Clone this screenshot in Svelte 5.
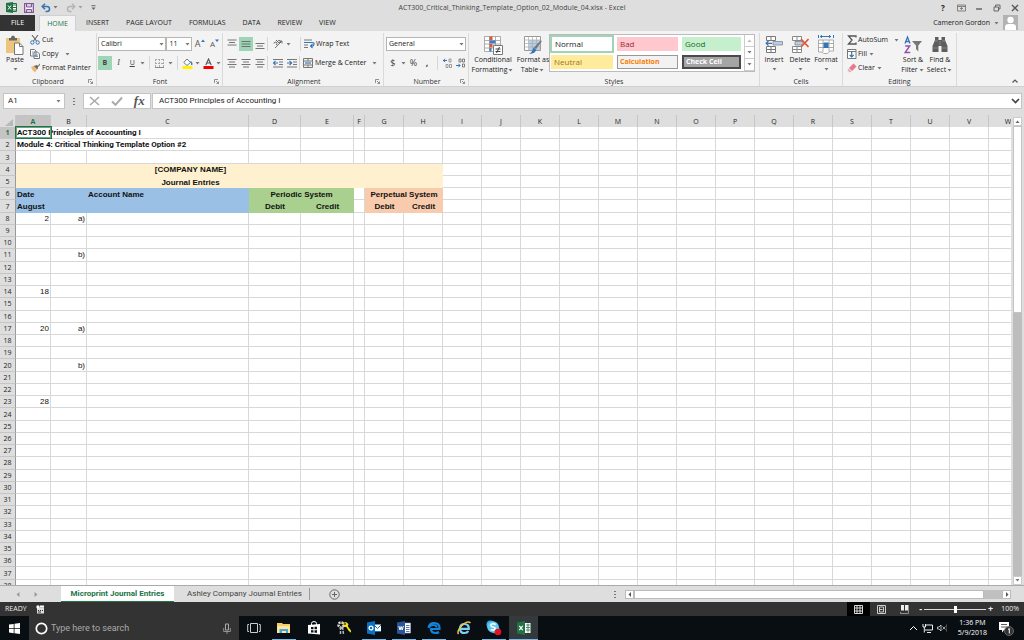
<script>
  const menuTabs = ['INSERT', 'PAGE LAYOUT', 'FORMULAS', 'DATA', 'REVIEW', 'VIEW'];
  const columns = [
    ['A', 35], ['B', 36], ['C', 162], ['D', 52], ['E', 53], ['F', 11], ['G', 39], ['H', 39],
    ['I', 39], ['J', 39], ['K', 39], ['L', 39], ['M', 39], ['N', 39], ['O', 39], ['P', 39],
    ['Q', 39], ['R', 39], ['S', 39], ['T', 39], ['U', 39], ['V', 39], ['W', 39]
  ];
  const tableWidth = columns.reduce((sum, c) => sum + c[1], 16);

  // Leading cells of each row; the remaining columns are filled with blanks.
  const content = {
    1: [{ t: 'ACT300 Principles of Accounting I', c: 'calibri open sel' }, { c: 'open' }],
    2: [{ t: 'Module 4: Critical Thinking Template Option #2', c: 'calibri open' }, { c: 'open' }],
    4: [{ t: '[COMPANY NAME]', c: 'yellow', span: 6 }, { c: 'yellow', span: 2 }],
    5: [{ t: 'Journal Entries', c: 'yellow', span: 6 }, { c: 'yellow', span: 2 }],
    6: [{ t: 'Date', c: 'blue' }, { c: 'blue' }, { t: 'Account Name', c: 'blue' }, { t: 'Periodic System', c: 'green', span: 2 }, {}, { t: 'Perpetual System', c: 'peach', span: 2 }],
    7: [{ t: 'August', c: 'blue' }, { c: 'blue' }, { c: 'blue' }, { t: 'Debit', c: 'green' }, { t: 'Credit', c: 'green' }, {}, { t: 'Debit', c: 'peach' }, { t: 'Credit', c: 'peach' }],
    8: [{ t: '2', c: 'num' }, { t: 'a)', c: 'num' }],
    11: [{}, { t: 'b)', c: 'num' }],
    14: [{ t: '18', c: 'num' }],
    17: [{ t: '20', c: 'num' }, { t: 'a)', c: 'num' }],
    20: [{}, { t: 'b)', c: 'num' }],
    23: [{ t: '28', c: 'num' }]
  };
  const rows = Array.from({ length: 38 }, (_, i) => {
    const cells = [...(content[i + 1] ?? [])];
    let used = cells.reduce((n, c) => n + (c.span ?? 1), 0);
    while (used++ < columns.length) cells.push({});
    return { n: i + 1, cells };
  });
</script>

{#snippet caret()}
  <svg class="caret" width="5" height="3" viewBox="0 0 5 3"><path d="M0.5 0h4L2.5 2.5z" fill="#777" /></svg>
{/snippet}

{#snippet launcher()}
  <svg class="launcher" width="5" height="5" viewBox="0 0 5 5"><path d="M.5 4V.5H4M2 2l2.500 2.500M4.500 2.500v2h-2" fill="none" stroke="#777" stroke-width=".8" /></svg>
{/snippet}

{#snippet lines(rowsY, center)}
  <svg width="10" height="10" viewBox="0 0 10 10">
    {#each rowsY as y, i}
      <path d={center && i % 2 ? `M2 ${y}h6` : `M.5 ${y}h9`} stroke="#666" stroke-width=".9" />
    {/each}
  </svg>
{/snippet}

<div class="app">
  <header class="titlebar">
    <div class="quick">
      <svg width="11" height="11" viewBox="0 0 11 11"><path d="M5 1.500h5.500v8H5z" fill="#fff" stroke="#217346" /><path d="M7 3h3M7 5.500h3M7 8h3" stroke="#217346" /><path d="M0 1l7-1v11l-7-1z" fill="#217346" /><path d="M2 3.500l3 4M5 3.500l-3 4" stroke="#fff" /></svg>
      <button aria-label="Save"><svg width="10" height="10" viewBox="0 0 10 10"><path d="M.7.7h8.600v8.600H.7z" fill="#fff" stroke="#80569b" stroke-width="1.300" /><path d="M2.500 1v3h5V1M2.500 9V6.500h5V9" fill="#d9c8e4" stroke="#80569b" /></svg></button>
      <button aria-label="Undo"><svg width="10" height="10" viewBox="0 0 10 10"><path d="M1 3.500h5a2.300 2.300 0 0 1 0 5H4.500M4 .8L1.200 3.500 4 6.300" fill="none" stroke="#3574b5" stroke-width="1.500" /></svg>{@render caret()}</button>
      <button class="dim" aria-label="Redo"><svg width="10" height="10" viewBox="0 0 10 10"><path d="M9 3.500H4a2.300 2.300 0 0 0 0 5h1.500M6 .8l2.800 2.700L6 6.300" fill="none" stroke="#999" stroke-width="1.400" /></svg>{@render caret()}</button>
      <button aria-label="Customize"><svg width="5" height="6" viewBox="0 0 5 6"><path d="M.5.700h4" stroke="#666" /><path d="M.5 2.500h4l-2 2.500z" fill="#666" /></svg></button>
    </div>
    <div class="doc">ACT300_Critical_Thinking_Template_Option_02_Module_04.xlsx - Excel</div>
    <div class="window">
      <button class="help">?</button>
      <button aria-label="Ribbon display"><svg width="9" height="8" viewBox="0 0 9 8"><path d="M.5 1h8v6h-8zM.5 2.500h8M4.500 6V3.500M3 5l1.500-1.500L6 5" fill="none" stroke="#777" stroke-width=".9" /></svg></button>
      <button aria-label="Minimize"><svg width="8" height="8" viewBox="0 0 8 8"><path d="M1 5h6" stroke="#666" stroke-width="1.500" /></svg></button>
      <button aria-label="Restore"><svg width="8" height="8" viewBox="0 0 8 8"><path d="M1 3h4.500v4H1zM2.500 3V1h4.500v4H5.500" fill="none" stroke="#666" /></svg></button>
      <button aria-label="Close"><svg width="8" height="8" viewBox="0 0 8 8"><path d="M1 1l6 6M7 1L1 7" stroke="#555" stroke-width="1.400" /></svg></button>
    </div>
  </header>

  <nav class="tabs">
    <button class="file">FILE</button>
    <button class="home">HOME</button>
    {#each menuTabs as t}<button>{t}</button>{/each}
    <button class="user">Cameron Gordon {@render caret()}</button>
    <svg class="avatar" width="15" height="15" viewBox="0 0 15 15"><path d="M0 0h15v15H0z" fill="#b2b2b2" /><circle cx="7.500" cy="5" r="3.200" fill="#fff" /><path d="M2 15v-3q0-3 3.500-3h4q3.500 0 3.500 3v3z" fill="#fff" /></svg>
  </nav>

  <section class="ribbon">
    <div class="group clipboard">
      <div class="body">
        <button class="big paste">
          <svg width="20" height="20" viewBox="0 0 20 20"><path d="M1 3h14v15H1z" fill="#ecc57f" /><path d="M4 3h2q0-2.500 2-2.500T10 3h2v2.500H4z" fill="#666" /><path d="M9.500 8h5l3.500 3.500V19.500H9.500z" fill="#fff" stroke="#777" /><path d="M14.500 8v3.500H18" fill="none" stroke="#777" /></svg>
          <span>Paste</span>{@render caret()}
        </button>
        <div class="stack">
          <button><svg width="10" height="10" viewBox="0 0 10 10"><path d="M2 0l4.500 6M8 0L3.500 6" stroke="#666" stroke-width="1.100" /><circle cx="2.300" cy="7.500" r="1.700" fill="none" stroke="#3574b5" /><circle cx="7.700" cy="7.500" r="1.700" fill="none" stroke="#3574b5" /></svg>Cut</button>
          <button><svg width="10" height="10" viewBox="0 0 10 10"><path d="M.5.500h4l1.500 1.500v5H.5zM4 3h3.500L9.500 5v4.500H4z" fill="#fff" stroke="#777" /><path d="M5.500 6h2.500M5.500 7.500h2.500M2 3h1.500M2 5h1.500" stroke="#3574b5" stroke-width=".7" /></svg>Copy<i>{@render caret()}</i></button>
          <button><svg width="10" height="10" viewBox="0 0 10 10"><path d="M1 4l3.500-1.500 3 3L5 9.500 3.500 8 2.500 7z" fill="#ecb878" /><path d="M4 3l3-1 1 1 1.500-2.500L10 2 8 4 7.500 6.500z" fill="#666" /></svg>Format Painter</button>
        </div>
      </div>
      <div class="label">Clipboard{@render launcher()}</div>
    </div>

    <div class="group font">
      <div class="body col">
        <div class="line">
          <label class="combo face"><select aria-label="Font"><option>Calibri</option></select>{@render caret()}</label>
          <label class="combo size"><select aria-label="Font size"><option>11</option></select>{@render caret()}</label>
          <button class="grow">A<svg width="4" height="3" viewBox="0 0 4 3"><path d="M0 3l2-2.500L4 3z" fill="#3574b5" /></svg></button>
          <button class="shrink">A<svg width="4" height="3" viewBox="0 0 4 3"><path d="M0 .500L2 3 4 .500z" fill="#3574b5" /></svg></button>
        </div>
        <div class="line">
          <button class="sq on"><b>B</b></button>
          <button class="sq serif"><em>I</em></button>
          <button class="sq"><u>U</u></button>
          {@render caret()}<span class="sep"></span>
          <button class="sq" aria-label="Borders"><svg width="9" height="9" viewBox="0 0 9 9"><path d="M0 .5h9M.5 0v8M8.500 0v8M4.500 0v8M0 4.500h9" fill="none" stroke="#aaa" stroke-dasharray="2 1" /><path d="M0 8.500h9" stroke="#888" /></svg></button>
          {@render caret()}<span class="sep"></span>
          <button class="sq" aria-label="Fill color"><svg width="11" height="11" viewBox="0 0 11 11"><path d="M5 1l3.500 3.500L5 7.500 1.800 4.500z" fill="#fff" stroke="#777" /><path d="M8.500 3.500q2 1.500 1 3.500" fill="none" stroke="#3574b5" stroke-width="1.300" /><path d="M.5 8h10v3H.5z" fill="#fff200" /></svg></button>
          {@render caret()}
          <button class="sq" aria-label="Font color"><svg width="11" height="11" viewBox="0 0 11 11"><path d="M2.800 7L5.500 1l2.700 6M3.800 5h3.400" fill="none" stroke="#555" stroke-width="1.100" /><path d="M.5 8h10v3H.5z" fill="#f00000" /></svg></button>
          {@render caret()}
        </div>
      </div>
      <div class="label">Font{@render launcher()}</div>
    </div>

    <div class="group align">
      <div class="body col">
        <div class="line">
          <button class="sq" aria-label="Top align">{@render lines([1, 3.5, 6], true)}</button>
          <button class="sq on" aria-label="Middle align">{@render lines([2.5, 5, 7.5], false)}</button>
          <button class="sq" aria-label="Bottom align">{@render lines([4.5, 7, 9.5], true)}</button>
          <span class="sep near"></span>
          <button class="sq" aria-label="Orientation"><svg width="10" height="10" viewBox="0 0 10 10"><path d="M2 9L9 2M6.500 2H9v2.500" fill="none" stroke="#777" /><path d="M1 4.500a1.500 1.500 0 1 1 2 1.500M3 1l3 3a1.300 1.300 0 1 0-1-2" fill="none" stroke="#555" stroke-width=".9" /></svg></button>
          {@render caret()}<span class="sep far"></span>
          <button class="text"><svg width="11" height="10" viewBox="0 0 11 10"><path d="M0 1h8M0 3.500h6M0 6h4M0 8.500h4" stroke="#777" /><path d="M0 3.500h8q2.500 0 2 2T7 7M8.500 5L6.500 7l2 2" fill="none" stroke="#3574b5" stroke-width="1.100" /></svg>Wrap Text</button>
        </div>
        <div class="line">
          <button class="sq" aria-label="Align left">{@render lines([1.5, 4, 6.5, 9], true)}</button>
          <button class="sq" aria-label="Center">{@render lines([1.5, 4, 6.5, 9], true)}</button>
          <button class="sq" aria-label="Align right">{@render lines([1.5, 4, 6.5, 9], true)}</button>
          <span class="sep near"></span>
          <button class="sq" aria-label="Decrease indent"><svg width="10" height="10" viewBox="0 0 10 10"><path d="M0 1.500h10M6 4h4M6 6.500h4M0 9h10" stroke="#777" /><path d="M0 5h5M2.500 2.800L.5 5l2 2.200" fill="none" stroke="#3574b5" stroke-width="1.100" /></svg></button>
          <button class="sq" aria-label="Increase indent"><svg width="10" height="10" viewBox="0 0 10 10"><path d="M0 1.500h10M6 4h4M6 6.500h4M0 9h10" stroke="#777" /><path d="M0 5h5M2.500 2.800L4.700 5l-2.200 2.200" fill="none" stroke="#3574b5" stroke-width="1.100" /></svg></button>
          <span class="sep near"></span>
          <button class="text"><svg width="11" height="10" viewBox="0 0 11 10"><path d="M.5.500h9v9h-9zM.5 3h9M.5 7h9M5 .5V3M5 7v2.500" fill="none" stroke="#777" /><path d="M2 5h6" stroke="#3574b5" stroke-width="1.200" /></svg>Merge &amp; Center<i>{@render caret()}</i></button>
        </div>
      </div>
      <div class="label">Alignment{@render launcher()}</div>
    </div>

    <div class="group number">
      <div class="body col">
        <div class="line"><label class="combo general"><select aria-label="Number format"><option>General</option></select>{@render caret()}</label></div>
        <div class="line">
          <button class="sq large">$</button>{@render caret()}
          <button class="sq large">%</button>
          <button class="sq large"><b>,</b></button>
          <span class="sep"></span>
          <button class="sq" aria-label="Increase decimal"><svg width="10" height="10" viewBox="0 0 10 10"><path d="M0 2.500h4M2 .8L.4 2.500 2 4.200" fill="none" stroke="#3574b5" /><path d="M6 1h2v3H6zM3 6.500h2v3H3zM6.500 6.500h2v3h-2z" fill="none" stroke="#888" stroke-width=".8" /></svg></button>
          <button class="sq" aria-label="Decrease decimal"><svg width="10" height="10" viewBox="0 0 10 10"><path d="M0 7.500h4M2.500 5.800L4 7.500 2.500 9.200" fill="none" stroke="#3574b5" /><path d="M3 1h2v3H3zM6.500 1h2v3h-2zM6.500 6h2v3h-2z" fill="none" stroke="#666" stroke-width=".8" /></svg></button>
        </div>
      </div>
      <div class="label">Number{@render launcher()}</div>
    </div>

    <div class="group styles">
      <div class="body">
        <button class="big cond">
          <svg width="20" height="20" viewBox="0 0 20 20"><path d="M1.500 1.500h16v15h-16zM1.500 5.500h16M1.500 9h16M1.500 13h16M6.500 1.500v15M12.500 1.500v15" fill="#fff" stroke="#999" stroke-width=".8" /><path d="M6.500 1.500h3V5h-3z" fill="#d9573a" /><path d="M6.500 5.500h6v3h-6z" fill="#3f7ec2" /><path d="M6.500 9h3v3.500h-3z" fill="#d9573a" /><path d="M6.500 13h2v3.500h-2z" fill="#3f7ec2" /><path d="M10.500 10.500h9v9h-9z" fill="#fff" stroke="#777" /><path d="M12.500 14h5M12.500 16.500h5M16.500 12l-3 6" stroke="#444" /></svg>
          <span>Conditional</span><span>Formatting {@render caret()}</span>
        </button>
        <button class="big fmt">
          <svg width="20" height="20" viewBox="0 0 20 20"><path d="M1.500 1.500h16v14h-16z" fill="#fff" stroke="#999" /><path d="M6 5h11v10H6z" fill="#b5cfe9" /><path d="M1.500 5h16M1.500 8.500h16M1.500 12h16M5.500 1.500v14M9.500 1.500v14M13.500 1.500v14" stroke="#aaa" stroke-width=".7" /><path d="M19 6l-6 8-2-1.500 6.500-7z" fill="#777" /><path d="M10.500 12.500l2.500 2q0 4-7 4.500 3-1.500 4.500-6.500z" fill="#3574b5" /></svg>
          <span>Format as</span><span>Table {@render caret()}</span>
        </button>
        <div class="gallery">
          <button class="normal">Normal</button><button class="bad">Bad</button><button class="good">Good</button>
          <button class="neutral">Neutral</button><button class="calc">Calculation</button><button class="check">Check Cell</button>
          <div class="spin">
            <button aria-label="Previous styles"><svg width="5" height="3" viewBox="0 0 5 3"><path d="M.5 3h4L2.500.500z" fill="#bbb" /></svg></button>
            <button aria-label="Next styles">{@render caret()}</button>
            <button aria-label="More styles">{@render caret()}</button>
          </div>
        </div>
      </div>
      <div class="label">Styles</div>
    </div>

    <div class="group cells">
      <div class="body">
        <button class="big"><svg width="18" height="20" viewBox="0 0 18 20"><path d="M1.500 1.500h9v4h-9zM6 1.500v4M1.500 11.500h9v6h-9zM6 11.500v6M1.500 14.500h9" fill="#fff" stroke="#777" /><path d="M8 6.500h9.500v3.500H8z" fill="#b5cfe9" stroke="#888" stroke-width=".8" /><path d="M1 8.300h6M3.500 6L1.200 8.300l2.300 2.300" fill="none" stroke="#3574b5" stroke-width="1.300" /></svg><span>Insert</span>{@render caret()}</button>
        <button class="big"><svg width="18" height="20" viewBox="0 0 18 20"><path d="M1.500 1.500h9v4h-9zM6 1.500v4M1.500 11.500h9v6h-9zM6 11.500v6M1.500 14.500h9" fill="#fff" stroke="#888" /><path d="M4 6.500h8v3.500H4z" fill="#b5cfe9" stroke="#888" stroke-width=".8" /><path d="M10 4l7.500 8M17.500 4L10 12" stroke="#d9573a" stroke-width="1.600" /></svg><span>Delete</span>{@render caret()}</button>
        <button class="big"><svg width="18" height="20" viewBox="0 0 18 20"><path d="M3 1.500h11M5 .2L3.300 1.500 5 2.800M12 .2l1.700 1.300L12 2.800M1.500 0v3M16.500 0v3" fill="none" stroke="#3574b5" /><path d="M1.500 5h15v11h-4l-2 2.500h-4L5 17H1.500zM1.500 8.500h15M1.500 12.500h15M6 5v12M12 5v11" fill="#fff" stroke="#999" stroke-width=".8" /><path d="M6.500 7.500h5v5.500h-5z" fill="#3574b5" /></svg><span>Format</span>{@render caret()}</button>
      </div>
      <div class="label">Cells</div>
    </div>

    <div class="group editing">
      <div class="body">
        <div class="stack">
          <button><svg width="10" height="10" viewBox="0 0 10 10"><path d="M9 2.500V1H1.500L5 5 1.500 9H9V7.500" fill="none" stroke="#555" stroke-width="1.300" /></svg>AutoSum<i>{@render caret()}</i></button>
          <button><svg width="10" height="10" viewBox="0 0 10 10"><path d="M.5.500h8.500v9H.5zM.5 2.500H9" fill="#fff" stroke="#777" /><path d="M4.700 3v5M2.700 6l2 2 2-2" fill="none" stroke="#3574b5" stroke-width="1.200" /></svg>Fill{@render caret()}</button>
          <button><svg width="10" height="10" viewBox="0 0 10 10"><path d="M6.500.500l3 3L5 8 2 5z" fill="#e8788c" /><path d="M1.500 5.500l3 3L3 9.500.5 7.500z" fill="#f0a8b4" /></svg>Clear{@render caret()}</button>
        </div>
        <button class="big sort">
          <svg width="18" height="18" viewBox="0 0 18 18"><path d="M1 7.500L3.500 1 6 7.500M2 5.500h3" fill="none" stroke="#3574b5" stroke-width="1.300" /><path d="M1.200 10h4.500L1.200 16.500h5" fill="none" stroke="#9150b0" stroke-width="1.400" /><path d="M8 5h10l-3.700 4.500v6L12 13V9.500z" fill="#777" /></svg>
          <span>Sort &amp;</span><span>Filter {@render caret()}</span>
        </button>
        <button class="big find">
          <svg width="18" height="18" viewBox="0 0 18 18"><path d="M4 1h3.500v3H10.500V1H14v3l2.500 6v6H10.500v-6h-3v6h-6v-6L4 4z" fill="#5e5e5e" /><path d="M4 5h3M11 5h3M2 12h5M11 12h5M9 5v4" stroke="#999" stroke-width=".7" /></svg>
          <span>Find &amp;</span><span>Select {@render caret()}</span>
        </button>
      </div>
      <div class="label">Editing</div>
    </div>
    <button class="collapse" aria-label="Collapse the ribbon"><svg width="6" height="4" viewBox="0 0 6 4"><path d="M.5 3.500L3 1l2.500 2.500" fill="none" stroke="#555" stroke-width="1.200" /></svg></button>
  </section>

  <section class="formula">
    <label class="namebox"><input aria-label="Name box" value="A1" size="1" />{@render caret()}</label>
    <span class="dots"></span>
    <div class="fx">
      <button aria-label="Cancel"><svg width="11" height="10" viewBox="0 0 11 10"><path d="M1 1l9 8M10 1L1 9" stroke="#aaa" stroke-width="1.600" /></svg></button>
      <button aria-label="Enter"><svg width="12" height="10" viewBox="0 0 12 10"><path d="M1 5.500L4.500 8.800 11 1.500" fill="none" stroke="#aaa" stroke-width="2" /></svg></button>
      <button class="fn">fx</button>
    </div>
    <div class="entry">
      <input aria-label="Formula" value="ACT300 Principles of Accounting I" />
      <svg width="9" height="6" viewBox="0 0 9 6"><path d="M1 1l3.500 3.500L8 1" fill="none" stroke="#444" stroke-width="1.700" /></svg>
    </div>
  </section>

  <main class="sheet">
    <div class="grid">
      <table style:width="{tableWidth}px">
        <colgroup>
          <col style:width="16px" />
          {#each columns as [name, width]}<col style:width="{width}px" />{/each}
        </colgroup>
        <thead>
          <tr>
            <th class="corner"><svg width="8" height="7" viewBox="0 0 8 7"><path d="M8 0v7H0z" fill="#b8b8b8" /></svg></th>
            {#each columns as [name]}<th class:active={name === 'A'}>{name}</th>{/each}
          </tr>
        </thead>
        <tbody>
          {#each rows as row}
            <tr>
              <th class:active={row.n === 1}>{row.n}</th>
              {#each row.cells as cell}<td class={cell.c} colspan={cell.span}>{cell.t ?? ''}</td>{/each}
            </tr>
          {/each}
        </tbody>
      </table>
    </div>
    <div class="vscroll">
      <button aria-label="Scroll up"><svg width="5" height="3" viewBox="0 0 5 3"><path d="M.5 3h4L2.500.500z" fill="#666" /></svg></button>
      <span class="thumb"></span><span class="track"></span>
      <button aria-label="Scroll down">{@render caret()}</button>
    </div>
  </main>

  <footer class="sheets">
    <div class="arrows">
      <svg width="4" height="5" viewBox="0 0 4 5"><path d="M3.500 0v5L.5 2.500z" fill="#999" /></svg>
      <svg width="4" height="5" viewBox="0 0 4 5"><path d="M.5 0v5l3-2.500z" fill="#999" /></svg>
    </div>
    <button class="current">Microprint Journal Entries</button>
    <button class="other">Ashley Company Journal Entries</button>
    <button class="add" aria-label="New sheet"><svg width="11" height="11" viewBox="0 0 11 11"><circle cx="5.500" cy="5.500" r="4.700" fill="none" stroke="#666" /><path d="M3 5.500h5M5.500 3v5" stroke="#666" /></svg></button>
    <span class="dots"></span>
    <div class="hscroll">
      <button aria-label="Scroll left"><svg width="4" height="5" viewBox="0 0 4 5"><path d="M3 0v5L.5 2.500z" fill="#555" /></svg></button>
      <span class="thumb"></span><span class="track"></span>
      <button aria-label="Scroll right"><svg width="4" height="5" viewBox="0 0 4 5"><path d="M1 0v5l2.500-2.500z" fill="#555" /></svg></button>
    </div>
  </footer>

  <footer class="status">
    <span>READY</span>
    <svg class="macro" width="9" height="9" viewBox="0 0 9 9"><path d="M1 2.500h7v6H1z" fill="#ddd" /><circle cx="2" cy="2" r="1.700" fill="#fff" /><path d="M4 .500h4v2H4z" fill="#fff" /><path d="M2 5.500h1M4 5.500h1M6 5.500h1M2 7h3" stroke="#333" /></svg>
    <div class="views">
      <button class="on" aria-label="Normal view"><svg width="9" height="9" viewBox="0 0 9 9"><path d="M.5.500h8v8h-8zM.5 3h8M.5 6h8M3 .5v8M6 .5v8" fill="none" stroke="#eee" stroke-width=".9" /></svg></button>
      <button aria-label="Page layout view"><svg width="9" height="9" viewBox="0 0 9 9"><path d="M.5.500h8v8h-8z" fill="none" stroke="#ccc" /><path d="M2.500 2h4v5h-4zM2.500 4.500h3" fill="none" stroke="#ccc" /></svg></button>
      <button aria-label="Page break view"><svg width="9" height="9" viewBox="0 0 9 9"><path d="M1 0h3v5.500H1zM5 0h3v5.500H5z" fill="#eee" /><path d="M.5 7v1.500h8V0" fill="none" stroke="#aaa" stroke-width=".8" /></svg></button>
    </div>
    <label class="zoom"><b>-</b><input type="range" aria-label="Zoom" min="0" max="100" value="50" /><b>+</b></label>
    <span class="pct">100%</span>
  </footer>

  <footer class="taskbar">
    <button class="start" aria-label="Start"><svg width="11" height="11" viewBox="0 0 11 11"><path d="M0 1.600L4.700 1v4.200H0zM5.500.800L11 0v5.200H5.500zM0 5.900h4.700v4.300L0 9.500zM5.500 5.900H11V11l-5.500-.700z" fill="#fff" /></svg></button>
    <label class="search">
      <svg width="13" height="13" viewBox="0 0 13 13"><circle cx="6.500" cy="6.500" r="5.200" fill="none" stroke="#fff" stroke-width="1.700" /></svg>
      <input placeholder="Type here to search" aria-label="Search" />
      <svg width="8" height="11" viewBox="0 0 8 11"><path d="M2.500 1h3v6h-3z" fill="none" stroke="#aaa" /><path d="M.7 5v3.500h6.600V5M4 8.500V11" fill="none" stroke="#aaa" stroke-width=".8" /></svg>
    </label>
    <div class="apps">
      <button aria-label="Task view"><svg width="14" height="12" viewBox="0 0 14 12"><path d="M3.500 1.500h7v9h-7zM2 2.500H.7v7H2M12 2.500h1.300v7H12" fill="none" stroke="#ccc" /></svg></button>
      <button class="open" aria-label="File Explorer"><svg width="14" height="12" viewBox="0 0 14 12"><path d="M0 1h5l1 1h7v9H0z" fill="#f3cf68" /><path d="M0 4h13v7H0z" fill="#ffe69a" /><path d="M2.500 11V7h8.500v4H9V9H5v2z" fill="#3fa9e0" /></svg></button>
      <button aria-label="Store"><svg width="14" height="14" viewBox="0 0 14 14"><path d="M4.500 4V2.500q0-2 2.500-2T9.500 2.500V4" fill="none" stroke="#fff" /><path d="M1 4l12-1v10.500L1 12.500z" fill="#fff" /><path d="M4 6h2.500v2.300H4zM7.500 5.800H10v2.500H7.500zM4 9.200h2.500v2.300H4zM7.500 9.200H10v2.500H7.500z" fill="#111" /></svg></button>
      <button aria-label="Keys"><svg width="14" height="14" viewBox="0 0 14 14"><circle cx="4" cy="4" r="2.500" fill="none" stroke="#ddd" stroke-width="2.500" stroke-dasharray="2 1" /><path d="M3.500 6v7M5.500 6l1 7" stroke="#bbb" stroke-width="1.500" stroke-dasharray="3 1" /><path d="M6 2l3-1 2.500 2-1 3L7 6z" fill="#f2e21b" /><circle cx="8" cy="3" r=".9" fill="#333" /><path d="M9.500 5l4.500 6M11 9l1.500-1" stroke="#f2e21b" stroke-width="1.800" /></svg></button>
      <button class="open" aria-label="Outlook"><svg width="14" height="14" viewBox="0 0 14 14"><path d="M7 3.500h7v7H7z" fill="#fff" /><path d="M7 4l3.500 3.500L14 4M7 10.500h7" fill="none" stroke="#0a72c4" /><path d="M0 1.500L8 0v14l-8-1.500z" fill="#0a72c4" /><circle cx="4" cy="7" r="1.900" fill="none" stroke="#fff" stroke-width="1.300" /></svg></button>
      <button class="open" aria-label="Word"><svg width="14" height="14" viewBox="0 0 14 14"><path d="M7 2h6.500v10H7z" fill="#fff" stroke="#aac" stroke-width=".6" /><path d="M9 4.500h3.500M9 6.500h3.500M9 8.500h3.500M9 10.500h3.500" stroke="#2a5699" stroke-width=".8" /><path d="M0 1.500L8 0v14l-8-1.500z" fill="#2a5699" /><path d="M1.800 5L3 9l1.100-3.500L5.200 9l1.200-4" fill="none" stroke="#fff" /></svg></button>
      <button class="open" aria-label="Edge"><svg width="14" height="14" viewBox="0 0 14 14"><path d="M3.500 8h9q.5-6-5.500-6Q2.500 2 1.500 6.500 3.500 4 6.500 4q3 0 3 2.500M3.800 7.500Q4 12 8.500 12q2 0 3.500-1" fill="none" stroke="#1484da" stroke-width="2.200" /></svg></button>
      <button aria-label="Internet Explorer"><svg width="14" height="14" viewBox="0 0 14 14"><path d="M3.500 7.800h8.300Q12 3 7.500 3T3 7.800Q3.300 12 7.500 12q2.800 0 3.800-2" fill="none" stroke="#7fd0f5" stroke-width="2.200" /><path d="M1.500 13Q-.5 10 5 4.500T13.500 2" fill="none" stroke="#f1c53c" stroke-width="1.500" /></svg></button>
      <button class="open" aria-label="Skype"><svg width="16" height="16" viewBox="0 0 16 16"><circle cx="4.500" cy="4.500" r="4" fill="#29b1e8" /><circle cx="9.500" cy="9.500" r="4" fill="#29b1e8" /><circle cx="7" cy="7" r="5.800" fill="#5ec8f2" /><path d="M9.500 4.800Q8.500 3.300 6.500 3.700T5 6q.5 1 2.500 1.200T9 9.300q-1 1.500-4.300.200" fill="none" stroke="#fff" stroke-width="1.600" /><circle cx="12" cy="12" r="3.300" fill="#e81123" /></svg></button>
      <button class="focused" aria-label="Excel"><svg width="14" height="14" viewBox="0 0 14 14"><path d="M7 2h6.500v10H7z" fill="#fff" /><path d="M9 4h4M9 6.500h4M9 9h4M11 2.500v9" stroke="#217346" stroke-width=".8" /><path d="M0 1.500L8 0v14l-8-1.500z" fill="#217346" /><path d="M2.300 4.800l3.400 4.400M5.700 4.800L2.300 9.200" stroke="#fff" stroke-width="1.200" /></svg></button>
    </div>
    <div class="tray">
      <svg width="9" height="6" viewBox="0 0 9 6"><path d="M1 5l3.500-3.500L8 5" fill="none" stroke="#fff" /></svg>
      <svg width="11" height="9" viewBox="0 0 11 9"><path d="M3 1h7.500v5H3M5 8.500h4M1 0v3h2.500V0M2.300 3v5.500" fill="none" stroke="#eee" /></svg>
      <svg width="10" height="8" viewBox="0 0 10 8"><path d="M.5 3v2h1.500l2 2V1L2 3z" fill="none" stroke="#ddd" stroke-width=".8" /><path d="M5.500 2.500l3 3M8.500 2.500l-3 3" fill="none" stroke="#ccc" stroke-width=".8" /><path d="M9.500.500q1 3.500 0 7" fill="none" stroke="#777" stroke-width=".8" /></svg>
      <div class="clock"><span>1:36 PM</span><span>5/9/2018</span></div>
      <svg width="15" height="15" viewBox="0 0 15 15"><path d="M0 1h10v8H5l-2 2.500V9H0z" fill="#fff" /><path d="M2 3.500h6M2 6h6" stroke="#333" stroke-width=".8" /><circle cx="10" cy="10" r="4.500" fill="#333" stroke="#777" stroke-width=".8" /><path d="M9 8.500l1.300-1V12.500" fill="none" stroke="#fff" /></svg>
    </div>
  </footer>
</div>

<style>
  :global(body) { margin: 0; }
  .app { height: 100vh; display: flex; flex-direction: column; background: #dedede; color: #222; font: 7px/10px "Open Sans", sans-serif; white-space: nowrap; overflow: hidden; }
  button, input, select { font: inherit; color: inherit; border: 0; padding: 0; margin: 0; background: none; outline: 0; appearance: none; border-radius: 0; }
  button { display: flex; align-items: center; justify-content: center; white-space: nowrap; }
  svg { flex: none; }
  i { font-style: normal; display: flex; padding-left: 4px; }
  .caret { margin: 0 1px; }

  .titlebar { display: grid; grid-template-columns: 1fr auto 1fr; align-items: center; height: 15px; }
  .quick { display: flex; align-items: center; gap: 7px; padding-left: 6px; }
  .quick button { gap: 1px; }
  .dim { opacity: .6; }
  .doc { color: #444; }
  .window { display: flex; justify-content: flex-end; gap: 0; }
  .window button { width: 18px; }
  .help { font-weight: 700; font-size: 8px; }

  .tabs { display: flex; height: 16px; }
  .tabs button { padding: 0 9px 0 8px; }
  .tabs .file { background: #333; color: #fff; padding: 0 11px; margin-right: 4px; }
  .tabs .home { background: #f3f3f3; color: #217346; padding: 0 7px; border: 1px solid #d0d0d0; border-bottom: 0; margin-right: 2px; }
  .tabs .user { margin-left: auto; gap: 3px; padding: 0 3px; }
  .avatar { margin-right: 6px; }

  .ribbon { display: flex; height: 55px; background: #f3f3f3; border-bottom: 1px solid #d0d0d0; }
  .group { display: flex; flex-direction: column; box-sizing: border-box; border-right: 1px solid #dadada; margin: 2px 0 0; }
  .body { flex: 1; display: flex; }
  .col { flex-direction: column; gap: 5px; padding-top: 4px; }
  .line { display: flex; align-items: center; height: 14px; }
  .label { display: flex; justify-content: center; align-items: center; position: relative; height: 9px; color: #333; }
  .launcher { position: absolute; right: 3px; top: 2px; }
  .big { flex-direction: column; justify-content: flex-start; padding-top: 2px; }
  .big span { display: flex; align-items: center; height: 10px; }
  .big > svg:first-child { height: 20px; }
  .big > .caret { margin-top: 3px; }
  .stack { display: flex; flex-direction: column; }
  .stack button { height: 14px; gap: 2px; justify-content: flex-start; }
  .clipboard { width: 97px; }
  .paste { width: 30px; }
  .font { width: 126px; padding-left: 1px; }
  .align { width: 161px; padding-left: 2px; }
  .number { width: 85px; padding-left: 2px; }
  .styles { width: 291px; }
  .cells { width: 83px; }
  .editing { width: 114px; }
  .cells .body { padding-left: 1px; }
  .cells .big { width: 26px; }
  .editing .stack { width: 57px; padding-left: 4px; box-sizing: border-box; }
  .editing .stack button { gap: 1px; }
  .sort { width: 26px; }
  .find { width: 28px; }
  .cond { width: 48px; }
  .fmt { width: 32px; }
  .combo { display: flex; align-items: center; box-sizing: border-box; height: 14px; border: 1px solid #b5b5b5; background: #fff; color: #222; }
  .combo select { flex: 1; min-width: 0; padding-left: 2px; }
  .face { width: 69px; }
  .size { width: 26px; }
  .general { width: 80px; }
  .grow, .shrink { width: 15px; font-size: 9px; align-items: flex-start; color: #555; }
  .shrink { font-size: 8px; }
  .sq { width: 14px; height: 14px; color: #444; }
  .on { background: #9fd5b7; }
  .large { font-size: 9px; }
  .serif { font-family: "Liberation Serif", serif; font-size: 8px; }
  .sep { width: 1px; height: 14px; background: #d6d6d6; margin: 0 3px; }
  .near { margin-left: 0; }
  .far { margin-left: 8px; }
  .text { gap: 1px; }

  .gallery { display: grid; grid-template-columns: 66px 65px 63px 10px; grid-template-rows: 18px 18px; box-sizing: border-box; border: 1px solid #bbb; background: #fff; height: 38px; margin-top: 1px; font-size: 8px; }
  .gallery > button { justify-content: flex-start; padding-left: 3px; margin: 2px 3px 2px 1px; }
  .gallery > .normal { color: #222; border: 2px solid #9fd5b7; margin: 0 2px 0 0; }
  .bad { background: #ffc7ce; color: #9c2b35; }
  .good { background: #c6efce; color: #17691f; }
  .neutral { background: #ffeb9c; color: #a0741a; }
  .gallery > .calc, .gallery > .check { font-size: 7px; padding-left: 2px; }
  .calc { background: #f2f2f2; color: #fa7d00; border: 1px solid #999; font-weight: 700; }
  .check { background: #a5a5a5; color: #fff; border: 2px solid #4a4a4a; font-weight: 700; }
  .spin { grid-area: 1 / 4 / 3 / 5; display: flex; flex-direction: column; border-left: 1px solid #ccc; }
  .spin button { flex: 1; border-bottom: 1px solid #ccc; }
  .collapse { margin-left: auto; align-self: flex-end; width: 18px; height: 10px; }

  .formula { display: flex; height: 16px; padding: 6px 2px 6px 3px; color: #222; font-family: Roboto, sans-serif; font-size: 8px; }
  .formula > * { box-sizing: border-box; }
  .namebox { display: flex; align-items: center; width: 62px; background: #fff; border: 1px solid #c4c4c4; padding: 0 2px 0 4px; }
  .namebox input { flex: 1; min-width: 0; }
  .dots { width: 2px; height: 7px; align-self: center; background: repeating-linear-gradient(#777 0 1px, transparent 1px 3px); }
  .formula .dots { margin: 0 8px; }
  .fx { display: flex; align-items: center; justify-content: space-around; width: 68px; background: #fff; border: 1px solid #c4c4c4; }
  .fn { font: italic 700 13px/14px "Liberation Serif", serif; color: #555; }
  .entry { flex: 1; display: flex; align-items: center; background: #fff; border: 1px solid #c4c4c4; margin-left: 1px; padding: 0 1px 0 6px; }
  .entry input { flex: 1; font-size: 8px; }

  .sheet { flex: 1; min-height: 0; display: flex; border-bottom: 1px solid #aaa; }
  .grid { flex: 1; min-width: 0; height: 100%; overflow: hidden; }
  table { table-layout: fixed; border-collapse: separate; border-spacing: 0; height: calc(100% + 7px); }
  th, td { padding: 0; box-sizing: border-box; line-height: 11px; border: 0 solid #d8d8d8; border-width: 0 1px 1px 0; }
  th { font-weight: 400; background: #dedede; color: #222; text-align: center; border-color: #c6c6c6; }
  thead th { border-bottom-width: 0; height: 12px; }
  tbody th { border-right-color: #999; }
  th.active { background: #c4c4c4; color: #217346; font-weight: 700; }
  .corner { text-align: right; }
  .corner svg { display: block; margin: 3px 2px 0 auto; }
  td { background: #fff; color: #111; font-family: "Liberation Sans", sans-serif; font-size: 8px; }
  td.calibri { font-family: Roboto, sans-serif; font-weight: 700; position: relative; padding-left: 1px; }
  td.open { border-right-width: 0; }
  td.sel::after { content: ""; position: absolute; inset: -1px; border: 1px solid #217346; outline: 1px solid #6ba585; outline-offset: -2px; }
  td.num { text-align: right; padding-right: 1px; }
  td.yellow, td.blue, td.green, td.peach { border-width: 0; font-weight: 700; text-align: center; }
  td.yellow { background: #fff1cf; }
  td.blue { background: #9bc0e6; text-align: left; padding-left: 1px; }
  td.green { background: #a9d08e; }
  td.peach { background: #f8cbad; }
  .vscroll { display: flex; flex-direction: column; width: 9px; margin: 2px 2px 0; }
  .vscroll button { height: 9px; background: #fff; border: 1px solid #ccc; box-sizing: border-box; }
  .vscroll .thumb { flex: 186; background: #fff; border: 1px solid #c4c4c4; }
  .vscroll .track { flex: 264; background: #bdbdbd; }

  .sheets { display: flex; height: 16px; align-items: stretch; font-family: Roboto, sans-serif; font-size: 8px; color: #444; }
  .arrows { display: flex; align-items: center; gap: 14px; width: 45px; padding-left: 16px; }
  .current { width: 113px; background: #fff; color: #217346; font-weight: 700; border-bottom: 1px solid #217346; }
  .other { width: 136px; border-right: 1px solid #999; margin: 2px 0; padding-left: 6px; box-sizing: border-box; }
  .add { width: 49px; }
  .sheets .dots { margin-left: auto; margin-right: 9px; }
  .hscroll { display: flex; width: 386px; height: 9px; align-self: center; margin-right: 13px; }
  .hscroll button { width: 9px; background: #fff; border: 1px solid #bbb; box-sizing: border-box; }
  .hscroll .thumb { flex: 350; background: #fff; border: 1px solid #bbb; box-sizing: border-box; }
  .hscroll .track { flex: 18; background: #c0c0c0; }

  .status { display: flex; height: 14px; align-items: center; background: #333; color: #eee; padding: 0 5px; }
  .macro { margin-left: 9px; }
  .views { display: flex; margin-left: auto; height: 14px; }
  .views button { width: 23px; }
  .views .on { background: #000; }
  .zoom { display: flex; align-items: center; gap: 2px; font-size: 9px; margin: 0 8px 0 3px; }
  .zoom input { width: 62px; height: 10px; background: linear-gradient(#ddd, #ddd) center / 100% 1px no-repeat; }
  .zoom input::-webkit-slider-thumb { appearance: none; width: 3px; height: 7px; background: #fff; }

  .taskbar { display: flex; height: 24px; background: #080e12; color: #fff; }
  .start { width: 29px; }
  .search { display: flex; align-items: center; width: 210px; box-sizing: border-box; background: #333; padding: 0 8px 0 6px; gap: 3px; font-size: 9px; }
  .search input { flex: 1; min-width: 0; font-family: Roboto, sans-serif; font-size: 9px; }
  .search input::placeholder { color: #aaa; opacity: 1; }
  .apps { display: flex; }
  .apps button { width: 24px; margin: 0 3px; border-bottom: 1px solid transparent; }
  .apps .open { border-color: #76b9ed; }
  .apps .focused { width: 29px; margin: 0; background: #34393c; border-color: #76b9ed; }
  .tray { display: flex; align-items: center; gap: 4px; margin-left: auto; padding-right: 10px; }
  .clock { display: flex; flex-direction: column; align-items: center; margin: 0 8px 0 7px; }
</style>
